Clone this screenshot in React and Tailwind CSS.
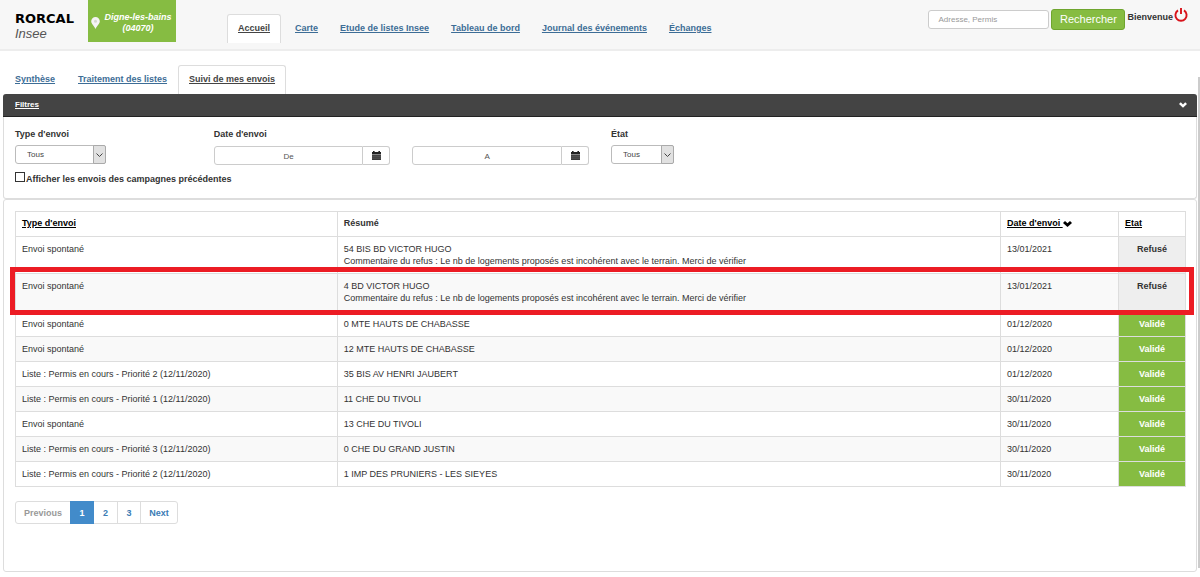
import React from 'react'

const navLinks = [
  { label: 'Accueil', active: true },
  { label: 'Carte' },
  { label: 'Etude de listes Insee' },
  { label: 'Tableau de bord' },
  { label: 'Journal des événements' },
  { label: 'Échanges' },
]

const refusal =
  'Commentaire du refus : Le nb de logements proposés est incohérent avec le terrain. Merci de vérifier'

const rows = [
  { type: 'Envoi spontané', resume: '54 BIS BD VICTOR HUGO', comment: refusal, date: '13/01/2021', etat: 'Refusé' },
  { type: 'Envoi spontané', resume: '4 BD VICTOR HUGO', comment: refusal, date: '13/01/2021', etat: 'Refusé', highlight: true },
  { type: 'Envoi spontané', resume: '0 MTE HAUTS DE CHABASSE', date: '01/12/2020', etat: 'Validé' },
  { type: 'Envoi spontané', resume: '12 MTE HAUTS DE CHABASSE', date: '01/12/2020', etat: 'Validé' },
  { type: 'Liste : Permis en cours - Priorité 2 (12/11/2020)', resume: '35 BIS AV HENRI JAUBERT', date: '01/12/2020', etat: 'Validé' },
  { type: 'Liste : Permis en cours - Priorité 1 (12/11/2020)', resume: '11 CHE DU TIVOLI', date: '30/11/2020', etat: 'Validé' },
  { type: 'Envoi spontané', resume: '13 CHE DU TIVOLI', date: '30/11/2020', etat: 'Validé' },
  { type: 'Liste : Permis en cours - Priorité 3 (12/11/2020)', resume: '0 CHE DU GRAND JUSTIN', date: '30/11/2020', etat: 'Validé' },
  { type: 'Liste : Permis en cours - Priorité 2 (12/11/2020)', resume: '1 IMP DES PRUNIERS - LES SIEYES', date: '30/11/2020', etat: 'Validé' },
]

function ChevronIcon({ className }) {
  return (
    <svg viewBox="0 0 9 6" className={className} fill="currentColor" aria-hidden="true">
      <path d="M2 0 4.5 2.3 7 0 9 2 4.5 6 0 2z" />
    </svg>
  )
}

function PinIcon() {
  return (
    <svg viewBox="0 0 9 12" className="w-[9px] h-3 shrink-0" aria-hidden="true">
      <path d="M4.5 0A4.3 4.3 0 0 0 .2 4.3C.2 7 3 8.500 4.5 12 6 8.500 8.800 7 8.800 4.300A4.300 4.300 0 0 0 4.500 0z" fill="#f4f4f4" />
      <circle cx="4.5" cy="4.300" r="1.500" fill="#d4d8cf" />
    </svg>
  )
}

function CalendarIcon() {
  return (
    <svg viewBox="0 0 9 9" className="w-[9px] h-[9px]" aria-hidden="true">
      <path d="M1 0h1.6v1h3.8V0H8v1h1v2H0V1h1z" fill="#222" />
      <path d="M0 3.4h9V9H0z" fill="#3a3a3a" />
      <path d="M0 5.2h9M0 7.1h9" stroke="#888" strokeWidth="0.4" />
    </svg>
  )
}

function PowerIcon() {
  return (
    <svg viewBox="0 0 14 14" className="w-[14px] h-[14px]" fill="none" stroke="#d8131b" strokeWidth="1.9" aria-hidden="true">
      <path d="M4 2.400a5.600 5.600 0 1 0 6 0" />
      <path d="M7 0v6" />
    </svg>
  )
}

function Header() {
  return (
    <header className="flex items-start bg-[#f7f7f7] border-b-2 border-[#ededed] min-h-[51px]">
      <div className="w-[88px] pl-[15px] pt-[11px]">
        <h1 className="font-['DejaVu_Sans',sans-serif] text-[13px] leading-[15px] font-bold text-black">RORCAL</h1>
        <p className="text-[13px] leading-[15px] italic text-[#555]">Insee</p>
      </div>

      <div className="flex items-center bg-[#86bc42] text-white w-[88px] h-[42px] pl-[3px] pt-1">
        <PinIcon />
        <p className="flex-1 text-center text-[9px] leading-[11px] font-bold italic">
          Digne-les-bains
          <br />
          (04070)
        </p>
      </div>

      <nav className="flex ml-[51px] mt-[14px]">
        {navLinks.map((link) => (
          <a
            key={link.label}
            href="#"
            className={
              link.active
                ? 'px-[10px] mr-[3px] h-[29px] leading-[27px] font-bold underline text-[#444] bg-white border border-b-0 border-[#ddd] rounded-t-[3px]'
                : 'px-[11px] h-[29px] leading-[29px] font-bold underline text-[#3d6d96]'
            }
          >
            {link.label}
          </a>
        ))}
      </nav>

      <form className="flex items-start ml-auto pr-3 pt-2">
        <input
          type="text"
          aria-label="Adresse, Permis"
          placeholder="Adresse, Permis"
          className="w-[121px] h-[19px] mt-[2px] mr-[2px] px-[9px] text-[8px] bg-white border border-[#ccc] rounded-[3px] placeholder:text-[#999]"
        />
        <button type="button" className="w-[74px] h-[21px] mt-px text-[11px] leading-[19px] text-white bg-[#86bc42] border border-[#6fa52e] rounded-[3px]">
          Rechercher
        </button>
        <span className="ml-[2px] mt-[3px] font-bold">Bienvenue</span>
        <button type="button" aria-label="Déconnexion" className="ml-px">
          <PowerIcon />
        </button>
      </form>
    </header>
  )
}

function SubTabs() {
  return (
    <nav className="flex pt-[14px]">
      <a href="#" className="w-[75px] pl-[15px] leading-[29px] font-bold underline text-[#3d6d96]">Synthèse</a>
      <a href="#" className="w-[103px] pl-[3px] leading-[29px] font-bold underline text-[#3d6d96]">Traitement des listes</a>
      <a href="#" className="px-[10px] h-[29px] leading-[27px] font-bold underline text-[#444] bg-white border border-b-0 border-[#ddd] rounded-t-[3px]">
        Suivi de mes envois
      </a>
    </nav>
  )
}

function SelectBox({ id, className }) {
  return (
    <div className={`relative ${className}`}>
      <select id={id} className="appearance-none w-full h-[19px] pl-[11px] text-[8px] text-[#444] bg-white border border-[#bbb] rounded-[3px]">
        <option>Tous</option>
      </select>
      <span className="absolute inset-y-0 right-0 w-[13px] flex items-center justify-center bg-[#e1e1e1] border border-[#aaa] rounded-r-[2px] pointer-events-none">
        <svg viewBox="0 0 7 4" className="w-[7px] h-1" fill="none" stroke="#444" aria-hidden="true">
          <path d="M.5 .5l3 3 3-3" />
        </svg>
      </span>
    </div>
  )
}

function DateBox({ id, label, placeholder }) {
  return (
    <div className="flex h-[19px]">
      <input
        id={id}
        type="text"
        aria-label={label}
        placeholder={placeholder}
        className="flex-1 min-w-0 pt-[3px] text-center text-[8px] bg-white border border-[#ccc] rounded-l-[3px] placeholder:text-[#555]"
      />
      <button type="button" aria-label="Calendrier" className="w-[27px] flex items-center justify-center border border-l-0 border-[#ccc] rounded-r-[3px]">
        <CalendarIcon />
      </button>
    </div>
  )
}

function Filters() {
  return (
    <section className="border border-t-0 border-[#ddd] rounded-[3px]">
      <div className="flex items-center justify-between h-[23px] -mx-px pl-3 pr-[10px] bg-[#444] border-b border-[#222] text-white rounded-t-[3px]">
        <a href="#" className="text-[8px] font-bold underline">Filtres</a>
        <ChevronIcon className="w-2 h-[6px]" />
      </div>

      <div className="grid grid-cols-6 items-start pt-[11px]">
        <div className="px-[11px]">
          <label htmlFor="type" className="block mb-[5px] font-bold">Type d'envoi</label>
          <SelectBox id="type" className="w-[91px]" />
        </div>
        <div className="px-[11px]">
          <label htmlFor="from" className="block mb-[6px] font-bold">Date d'envoi</label>
          <DateBox id="from" label="Date d'envoi De" placeholder="De" />
        </div>
        <div className="px-[11px] pt-[18px]">
          <DateBox id="to" label="Date d'envoi A" placeholder="A" />
        </div>
        <div className="px-[11px]">
          <label htmlFor="etat" className="block mb-[5px] font-bold">État</label>
          <SelectBox id="etat" className="w-[63px]" />
        </div>
      </div>

      <label className="flex items-start px-[11px] pt-[7px] pb-[13px] font-bold">
        <input type="checkbox" className="appearance-none w-[10px] h-[10px] mr-px bg-white border border-[#333]" />
        <span className="mt-px">Afficher les envois des campagnes précédentes</span>
      </label>
    </section>
  )
}

function EnvoisTable() {
  return (
    <table className="table-fixed w-full border-collapse border border-[#ddd]">
      <colgroup>
        <col className="w-[27.5%]" />
        <col />
        <col className="w-[118px]" />
        <col className="w-[67px]" />
      </colgroup>
      <thead>
        <tr className="text-left">
          <th className="px-[6px] pt-[5px] pb-[7px] border border-[#ddd]"><a href="#" className="text-black underline">Type d'envoi</a></th>
          <th className="px-[6px] pt-[5px] pb-[7px] border border-[#ddd]">Résumé</th>
          <th className="px-[6px] pt-[5px] pb-[7px] border border-[#ddd] text-black">
            <a href="#" className="underline">Date d'envoi </a>
            <ChevronIcon className="inline w-[9px] h-[6px]" />
          </th>
          <th className="px-[6px] pt-[5px] pb-[7px] border border-[#ddd]"><a href="#" className="text-black underline">Etat</a></th>
        </tr>
      </thead>
      <tbody>
        {rows.map((row, i) => (
          <tr key={i} className={row.highlight ? 'relative align-top h-[38px] bg-[#f9f9f9]' : 'align-top even:bg-[#f9f9f9]'}>
            <td className="px-[6px] py-[6px] border border-[#ddd]">
              {row.type}
              {row.highlight && (
                <span className="absolute -left-[6px] -right-[8px] -top-[7px] -bottom-[3px] border-[5px] border-[#ec1c24] z-10 pointer-events-none" />
              )}
            </td>
            <td className="px-[6px] py-[6px] border border-[#ddd]">
              {row.resume}
              {row.comment && <p>{row.comment}</p>}
            </td>
            <td className="px-[6px] py-[6px] border border-[#ddd]">{row.date}</td>
            <td
              className={
                row.etat === 'Validé'
                  ? 'py-[6px] border border-[#ddd] text-center font-bold text-white bg-[#86bc42]'
                  : 'py-[6px] border border-[#ddd] text-center font-bold bg-[#eee]'
              }
            >
              {row.etat}
            </td>
          </tr>
        ))}
      </tbody>
    </table>
  )
}

function Pagination() {
  return (
    <nav className="flex w-fit h-[23px] mt-[14px] font-bold text-[#3b7cb5] border border-[#ddd] rounded-[3px]">
      <button type="button" disabled className="w-[54px] text-[#999]">Previous</button>
      <button type="button" className="w-6 -my-px bg-[#428bca] text-white">1</button>
      <button type="button" className="w-[23px]">2</button>
      <button type="button" className="w-6 border-x border-[#ddd]">3</button>
      <button type="button" className="w-9">Next</button>
    </nav>
  )
}

function App() {
  return (
    <div className="bg-white font-['Liberation_Sans',Arial,sans-serif] text-[9px] leading-3 text-[#333]">
      <Header />
      <div className="flex">
        <main className="flex-1 min-w-0">
          <SubTabs />
          <div className="pl-[3px] pr-px">
            <Filters />
            <section className="border border-[#ddd] rounded-[3px] pl-[11px] pr-[10px] pt-[11px] pb-[47px]">
              <EnvoisTable />
              <Pagination />
            </section>
          </div>
        </main>
        <div className="w-[2px] mt-[26px] mb-1 bg-[#ccc]" />
      </div>
    </div>
  )
}

export default App
